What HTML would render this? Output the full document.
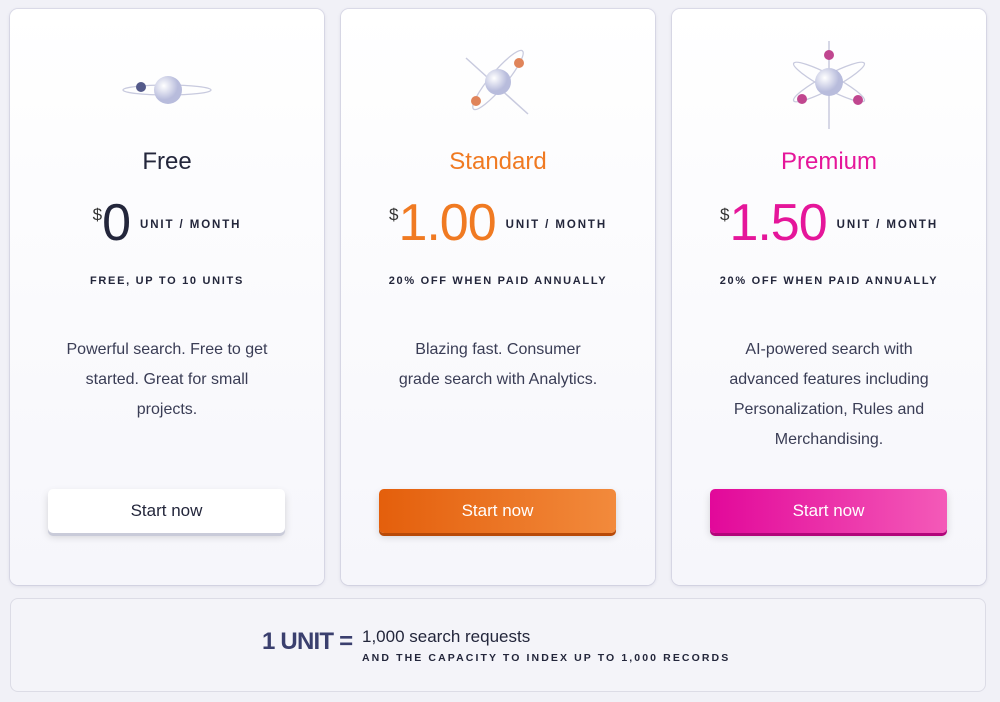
<!DOCTYPE html><html><head><style>
body{margin:0;width:1000px;height:702px;background:#f1f1f7;font-family:"Liberation Sans",sans-serif;position:relative;overflow:hidden;color:#23263b}
.card{position:absolute;top:9px;width:314px;height:576px;border-radius:8px;background:linear-gradient(#fff,#f6f6fb);box-shadow:0 1px 4px rgba(30,30,80,.12),0 0 0 1px rgba(200,200,220,.4)}
.ic{position:absolute;left:0;top:23px;width:314px;height:110px}
.t{position:absolute;top:139px;width:100%;text-align:center;font-size:24px}
.p{position:absolute;top:184px;width:100%;text-align:center;white-space:nowrap}
.p .d{font-size:17px;vertical-align:20px;color:#333}
.p .n{font-size:52px;letter-spacing:-1px}
.p .u{font-size:11.5px;font-weight:bold;letter-spacing:1.9px;vertical-align:12px;margin-left:10px;color:#23263b}
.s{position:absolute;top:266px;width:100%;text-align:center;font-size:11px;font-weight:bold;letter-spacing:1.7px;color:#23263b}
.desc{position:absolute;top:326px;left:20px;right:20px;text-align:center;font-size:16px;line-height:30px;color:#3a3d55}
.b{position:absolute;top:480px;left:38px;width:237px;height:44px;border-radius:5px;text-align:center;line-height:43px;font-size:17px}
</style></head><body>
<div class="card" style="left:10px">
<svg class="ic" viewBox="0 0 314 110"><defs><radialGradient id="g" cx=".35" cy=".35"><stop offset="0" stop-color="#fff"/><stop offset="1" stop-color="#b8bcdc"/></radialGradient></defs>
<ellipse cx="157" cy="58" rx="44" ry="5" fill="none" stroke="#c8cade" stroke-width="1.3"/><circle cx="158" cy="58" r="14" fill="url(#g)"/><circle cx="131" cy="55" r="5" fill="#545a8a"/></svg>
<div class="t">Free</div>
<div class="p"><span class="d">$</span><span class="n">0</span><span class="u">UNIT / MONTH</span></div>
<div class="s">FREE, UP TO 10 UNITS</div>
<div class="desc">Powerful search. Free to get<br>started. Great for small<br>projects.</div>
<div class="b" style="background:#fff;box-shadow:0 3px 0 #c9cbd9,0 4px 8px rgba(0,0,0,.15)">Start now</div>
</div>
<div class="card" style="left:341px">
<svg class="ic" viewBox="0 0 314 110" style="top:21px"><defs><radialGradient id="g2" cx=".35" cy=".35"><stop offset="0" stop-color="#fff"/><stop offset="1" stop-color="#b8bcdc"/></radialGradient></defs>
<line x1="125" y1="28" x2="187" y2="84" stroke="#c8cade" stroke-width="1.5"/><ellipse cx="157" cy="50" rx="38" ry="8" transform="rotate(-50 157 50)" fill="none" stroke="#c8cade" stroke-width="1.3"/><circle cx="157" cy="52" r="13" fill="url(#g2)"/><circle cx="178" cy="33" r="5" fill="#e0845a"/><circle cx="135" cy="71" r="5" fill="#e0845a"/></svg>
<div class="t" style="color:#f07a22">Standard</div>
<div class="p"><span class="d">$</span><span class="n" style="color:#f07a22">1.00</span><span class="u">UNIT / MONTH</span></div>
<div class="s">20% OFF WHEN PAID ANNUALLY</div>
<div class="desc">Blazing fast. Consumer<br>grade search with Analytics.</div>
<div class="b" style="background:linear-gradient(90deg,#e45f0c,#f28a3c);color:#fff;box-shadow:0 3px 0 #b84a08,0 4px 8px rgba(0,0,0,.15)">Start now</div>
</div>
<div class="card" style="left:672px">
<svg class="ic" viewBox="0 0 314 110" style="top:18px"><defs><radialGradient id="g3" cx=".35" cy=".35"><stop offset="0" stop-color="#fff"/><stop offset="1" stop-color="#b8bcdc"/></radialGradient></defs>
<line x1="157" y1="14" x2="157" y2="102" stroke="#c8cade" stroke-width="1.5"/><ellipse cx="157" cy="55" rx="40" ry="7" transform="rotate(28 157 55)" fill="none" stroke="#c8cade" stroke-width="1.3"/><ellipse cx="157" cy="55" rx="40" ry="7" transform="rotate(-28 157 55)" fill="none" stroke="#c8cade" stroke-width="1.3"/><circle cx="157" cy="55" r="14" fill="url(#g3)"/><circle cx="157" cy="28" r="5" fill="#c0468f"/><circle cx="130" cy="72" r="5" fill="#c0468f"/><circle cx="186" cy="73" r="5" fill="#c0468f"/></svg>
<div class="t" style="color:#e5169a">Premium</div>
<div class="p"><span class="d">$</span><span class="n" style="color:#e5169a">1.50</span><span class="u">UNIT / MONTH</span></div>
<div class="s">20% OFF WHEN PAID ANNUALLY</div>
<div class="desc">AI-powered search with<br>advanced features including<br>Personalization, Rules and<br>Merchandising.</div>
<div class="b" style="background:linear-gradient(90deg,#e2089a,#f45ab8);color:#fff;box-shadow:0 3px 0 #b2067a,0 4px 8px rgba(0,0,0,.15)">Start now</div>
</div>
<div style="position:absolute;left:10px;top:598px;width:974px;height:92px;border:1px solid #dcdce6;border-radius:8px;background:#f4f4f9"></div>
<div style="position:absolute;left:262px;top:628px;font-size:24px;color:#3a3f6e;letter-spacing:-.8px;font-weight:bold">1 UNIT =</div>
<div style="position:absolute;left:362px;top:627px;font-size:17px;color:#23263b">1,000 search requests</div>
<div style="position:absolute;left:362px;top:652px;font-size:10.5px;font-weight:bold;letter-spacing:2.1px;color:#23263b">AND THE CAPACITY TO INDEX UP TO 1,000 RECORDS</div>
</body></html>
